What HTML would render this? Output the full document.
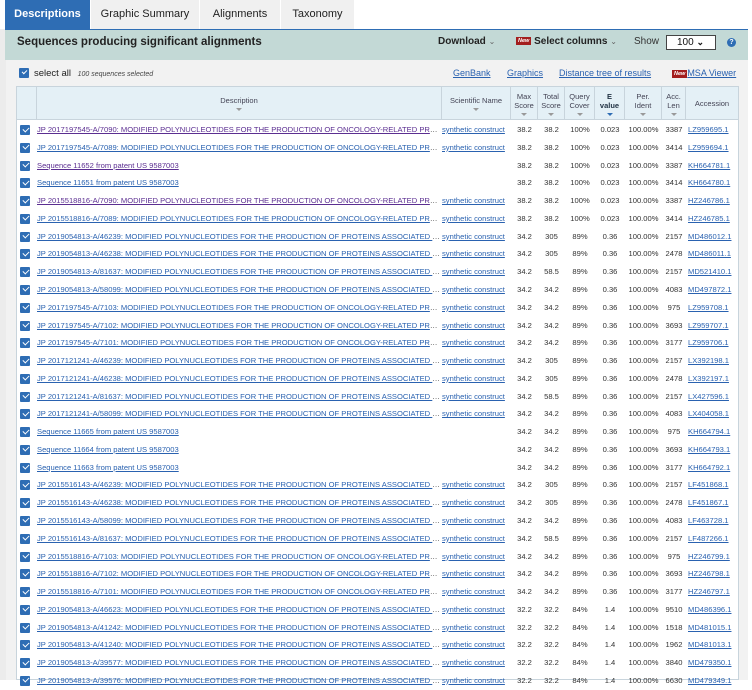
<!DOCTYPE html>
<html><head><meta charset="utf-8">
<style>
*{margin:0;padding:0;box-sizing:border-box}
body{width:752px;height:680px;overflow:hidden;background:#fff;font-family:"Liberation Sans",Arial,sans-serif;position:relative}
.abs{position:absolute}
.tab{position:absolute;top:0;height:29px;background:#f0f0f0;color:#222;font-size:11px;line-height:29px;text-align:center}
a{color:#2a62b0;text-decoration:underline}
.r{position:absolute;left:16px;width:723px;height:17.8px;font-size:7.6px;color:#333;line-height:17.8px;white-space:nowrap}
.r>span{position:absolute;top:0;overflow:hidden;text-overflow:ellipsis}
.cb{position:absolute;left:4px;top:4px;width:10px;height:10px;background:#2e6db4;border-radius:1px}
.cb:after{content:"";position:absolute;left:2.5px;top:1.5px;width:5px;height:3px;border-left:1.6px solid #fff;border-bottom:1.6px solid #fff;transform:rotate(-45deg)}
.d{left:21px;width:403px}
.s{left:426px;width:70px}
.c1{left:495px;width:27px;text-align:center}
.c2{left:522px;width:27px;text-align:center}
.c3{left:549px;width:30px;text-align:center}
.c4{left:579px;width:30px;text-align:center}
.c5{left:609px;width:37px;text-align:center}
.c6{left:646px;width:24px;text-align:center}
.c7{left:672px;width:51px;text-align:left}
.v{color:#5b2e91}
.h{position:absolute;top:87px;height:33px;font-size:7.5px;color:#445;text-align:center;line-height:9.5px;border-right:1px solid #c8d4dc;display:flex;flex-direction:column;justify-content:center;align-items:center}
.h i{display:block;width:0;height:0;border-left:3px solid transparent;border-right:3px solid transparent;border-top:3px solid #999;margin-top:2px}
.h i.b{border-top-color:#2e6db4}
.new{display:inline-block;background:#a31e1e;color:#fff;font-size:5.5px;font-style:italic;font-weight:bold;padding:1px 2px;vertical-align:middle}
</style></head><body>
<div class="abs" style="left:0;top:29px;width:6px;height:651px;background:#ececec"></div>
<div class="abs" style="left:6px;top:60px;width:742px;height:620px;background:#f2f2f2"></div>
<div class="tab" style="left:5px;width:85px;background:#2e6db4;color:#fff;font-weight:bold">Descriptions</div>
<div class="tab" style="left:91px;width:108px">Graphic Summary</div>
<div class="tab" style="left:200px;width:80px">Alignments</div>
<div class="tab" style="left:281px;width:73px">Taxonomy</div>
<div class="abs" style="left:5px;top:29px;width:743px;height:31px;background:#c3d9d6;border-top:1px solid #2e6db4"></div>
<div class="abs" style="left:17px;top:36px;font-size:11.5px;font-weight:bold;color:#222">Sequences producing significant alignments</div>
<div class="abs" style="left:438px;top:36px;font-size:10px;font-weight:bold;color:#222">Download <span style="font-weight:normal;color:#666;font-size:8px">&#8964;</span></div>
<div class="abs" style="left:516px;top:36px;font-size:10px;font-weight:bold;color:#222"><span class="new">New</span> Select columns <span style="font-weight:normal;color:#666;font-size:8px">&#8964;</span></div>
<div class="abs" style="left:634px;top:36px;font-size:10px;color:#333">Show</div>
<div class="abs" style="left:666px;top:35px;width:50px;height:15px;background:#fff;border:1px solid #444;font-size:10px;line-height:13px;padding-left:10px;color:#111">100 <b style="font-size:9px">&#8964;</b></div>
<div class="abs" style="left:727px;top:38px;width:9px;height:9px;border-radius:50%;background:#2e6db4;color:#fff;font-size:7px;font-weight:bold;text-align:center;line-height:9px">?</div>
<div class="abs" style="left:19px;top:68px;width:10px;height:10px;background:#2e6db4;border-radius:1px"></div>
<div class="abs" style="left:21.5px;top:69.5px;width:5px;height:3px;border-left:1.6px solid #fff;border-bottom:1.6px solid #fff;transform:rotate(-45deg)"></div>
<div class="abs" style="left:34px;top:68px;font-size:9.5px;color:#222">select all <i style="font-size:7px;color:#444;margin-left:4px">100 sequences selected</i></div>
<div class="abs" style="left:453px;top:68px;font-size:9px"><a>GenBank</a></div>
<div class="abs" style="left:507px;top:68px;font-size:9px"><a>Graphics</a></div>
<div class="abs" style="left:559px;top:68px;font-size:9px"><a>Distance tree of results</a></div>
<div class="abs" style="left:672px;top:68px;font-size:9px"><span class="new">New</span><a>MSA Viewer</a></div>
<div class="abs" style="left:16px;top:86px;width:723px;height:594px;background:#fff;border:1px solid #c8d4dc"></div>
<div class="abs" style="left:17px;top:87px;width:721px;height:33px;background:#e4f0f6;border-bottom:1px solid #c8d4dc"></div>
<div class="h" style="left:17px;width:20px"></div>
<div class="h" style="left:37px;width:405px">Description<i></i></div>
<div class="h" style="left:442px;width:69px">Scientific Name<i></i></div>
<div class="h" style="left:511px;width:27px">Max<br>Score<i></i></div>
<div class="h" style="left:538px;width:27px">Total<br>Score<i></i></div>
<div class="h" style="left:565px;width:30px">Query<br>Cover<i></i></div>
<div class="h" style="left:595px;width:30px;font-weight:bold;color:#234">E<br>value<i class="b"></i></div>
<div class="h" style="left:625px;width:37px">Per.<br>Ident<i></i></div>
<div class="h" style="left:662px;width:24px">Acc.<br>Len<i></i></div>
<div class="h" style="left:686px;width:52px;border-right:none">Accession</div>

<div class="r" style="top:121px"><i class="cb"></i><span class="d"><a class="v">JP 2017197545-A/7090: MODIFIED POLYNUCLEOTIDES FOR THE PRODUCTION OF ONCOLOGY-RELATED PROTEINS</a></span><span class="s"><a>synthetic construct</a></span><span class="c1">38.2</span><span class="c2">38.2</span><span class="c3">100%</span><span class="c4">0.023</span><span class="c5">100.00%</span><span class="c6">3387</span><span class="c7"><a>LZ959695.1</a></span></div>
<div class="r" style="top:138.8px"><i class="cb"></i><span class="d"><a>JP 2017197545-A/7089: MODIFIED POLYNUCLEOTIDES FOR THE PRODUCTION OF ONCOLOGY-RELATED PROTEINS</a></span><span class="s"><a>synthetic construct</a></span><span class="c1">38.2</span><span class="c2">38.2</span><span class="c3">100%</span><span class="c4">0.023</span><span class="c5">100.00%</span><span class="c6">3414</span><span class="c7"><a>LZ959694.1</a></span></div>
<div class="r" style="top:156.5px"><i class="cb"></i><span class="d"><a class="v">Sequence 11652 from patent US 9587003</a></span><span class="c1">38.2</span><span class="c2">38.2</span><span class="c3">100%</span><span class="c4">0.023</span><span class="c5">100.00%</span><span class="c6">3387</span><span class="c7"><a>KH664781.1</a></span></div>
<div class="r" style="top:174.3px"><i class="cb"></i><span class="d"><a>Sequence 11651 from patent US 9587003</a></span><span class="c1">38.2</span><span class="c2">38.2</span><span class="c3">100%</span><span class="c4">0.023</span><span class="c5">100.00%</span><span class="c6">3414</span><span class="c7"><a>KH664780.1</a></span></div>
<div class="r" style="top:192.1px"><i class="cb"></i><span class="d"><a class="v">JP 2015518816-A/7090: MODIFIED POLYNUCLEOTIDES FOR THE PRODUCTION OF ONCOLOGY-RELATED PROTEINS</a></span><span class="s"><a>synthetic construct</a></span><span class="c1">38.2</span><span class="c2">38.2</span><span class="c3">100%</span><span class="c4">0.023</span><span class="c5">100.00%</span><span class="c6">3387</span><span class="c7"><a>HZ246786.1</a></span></div>
<div class="r" style="top:209.9px"><i class="cb"></i><span class="d"><a>JP 2015518816-A/7089: MODIFIED POLYNUCLEOTIDES FOR THE PRODUCTION OF ONCOLOGY-RELATED PROTEINS</a></span><span class="s"><a>synthetic construct</a></span><span class="c1">38.2</span><span class="c2">38.2</span><span class="c3">100%</span><span class="c4">0.023</span><span class="c5">100.00%</span><span class="c6">3414</span><span class="c7"><a>HZ246785.1</a></span></div>
<div class="r" style="top:227.6px"><i class="cb"></i><span class="d"><a>JP 2019054813-A/46239: MODIFIED POLYNUCLEOTIDES FOR THE PRODUCTION OF PROTEINS ASSOCIATED WITH</a></span><span class="s"><a>synthetic construct</a></span><span class="c1">34.2</span><span class="c2">305</span><span class="c3">89%</span><span class="c4">0.36</span><span class="c5">100.00%</span><span class="c6">2157</span><span class="c7"><a>MD486012.1</a></span></div>
<div class="r" style="top:245.4px"><i class="cb"></i><span class="d"><a>JP 2019054813-A/46238: MODIFIED POLYNUCLEOTIDES FOR THE PRODUCTION OF PROTEINS ASSOCIATED WITH</a></span><span class="s"><a>synthetic construct</a></span><span class="c1">34.2</span><span class="c2">305</span><span class="c3">89%</span><span class="c4">0.36</span><span class="c5">100.00%</span><span class="c6">2478</span><span class="c7"><a>MD486011.1</a></span></div>
<div class="r" style="top:263.2px"><i class="cb"></i><span class="d"><a>JP 2019054813-A/81637: MODIFIED POLYNUCLEOTIDES FOR THE PRODUCTION OF PROTEINS ASSOCIATED WITH</a></span><span class="s"><a>synthetic construct</a></span><span class="c1">34.2</span><span class="c2">58.5</span><span class="c3">89%</span><span class="c4">0.36</span><span class="c5">100.00%</span><span class="c6">2157</span><span class="c7"><a>MD521410.1</a></span></div>
<div class="r" style="top:280.9px"><i class="cb"></i><span class="d"><a>JP 2019054813-A/58099: MODIFIED POLYNUCLEOTIDES FOR THE PRODUCTION OF PROTEINS ASSOCIATED WITH</a></span><span class="s"><a>synthetic construct</a></span><span class="c1">34.2</span><span class="c2">34.2</span><span class="c3">89%</span><span class="c4">0.36</span><span class="c5">100.00%</span><span class="c6">4083</span><span class="c7"><a>MD497872.1</a></span></div>
<div class="r" style="top:298.7px"><i class="cb"></i><span class="d"><a>JP 2017197545-A/7103: MODIFIED POLYNUCLEOTIDES FOR THE PRODUCTION OF ONCOLOGY-RELATED PROTEINS</a></span><span class="s"><a>synthetic construct</a></span><span class="c1">34.2</span><span class="c2">34.2</span><span class="c3">89%</span><span class="c4">0.36</span><span class="c5">100.00%</span><span class="c6">975</span><span class="c7"><a>LZ959708.1</a></span></div>
<div class="r" style="top:316.5px"><i class="cb"></i><span class="d"><a>JP 2017197545-A/7102: MODIFIED POLYNUCLEOTIDES FOR THE PRODUCTION OF ONCOLOGY-RELATED PROTEINS</a></span><span class="s"><a>synthetic construct</a></span><span class="c1">34.2</span><span class="c2">34.2</span><span class="c3">89%</span><span class="c4">0.36</span><span class="c5">100.00%</span><span class="c6">3693</span><span class="c7"><a>LZ959707.1</a></span></div>
<div class="r" style="top:334.2px"><i class="cb"></i><span class="d"><a>JP 2017197545-A/7101: MODIFIED POLYNUCLEOTIDES FOR THE PRODUCTION OF ONCOLOGY-RELATED PROTEINS</a></span><span class="s"><a>synthetic construct</a></span><span class="c1">34.2</span><span class="c2">34.2</span><span class="c3">89%</span><span class="c4">0.36</span><span class="c5">100.00%</span><span class="c6">3177</span><span class="c7"><a>LZ959706.1</a></span></div>
<div class="r" style="top:352px"><i class="cb"></i><span class="d"><a>JP 2017121241-A/46239: MODIFIED POLYNUCLEOTIDES FOR THE PRODUCTION OF PROTEINS ASSOCIATED WITH</a></span><span class="s"><a>synthetic construct</a></span><span class="c1">34.2</span><span class="c2">305</span><span class="c3">89%</span><span class="c4">0.36</span><span class="c5">100.00%</span><span class="c6">2157</span><span class="c7"><a>LX392198.1</a></span></div>
<div class="r" style="top:369.8px"><i class="cb"></i><span class="d"><a>JP 2017121241-A/46238: MODIFIED POLYNUCLEOTIDES FOR THE PRODUCTION OF PROTEINS ASSOCIATED WITH</a></span><span class="s"><a>synthetic construct</a></span><span class="c1">34.2</span><span class="c2">305</span><span class="c3">89%</span><span class="c4">0.36</span><span class="c5">100.00%</span><span class="c6">2478</span><span class="c7"><a>LX392197.1</a></span></div>
<div class="r" style="top:387.6px"><i class="cb"></i><span class="d"><a>JP 2017121241-A/81637: MODIFIED POLYNUCLEOTIDES FOR THE PRODUCTION OF PROTEINS ASSOCIATED WITH</a></span><span class="s"><a>synthetic construct</a></span><span class="c1">34.2</span><span class="c2">58.5</span><span class="c3">89%</span><span class="c4">0.36</span><span class="c5">100.00%</span><span class="c6">2157</span><span class="c7"><a>LX427596.1</a></span></div>
<div class="r" style="top:405.3px"><i class="cb"></i><span class="d"><a>JP 2017121241-A/58099: MODIFIED POLYNUCLEOTIDES FOR THE PRODUCTION OF PROTEINS ASSOCIATED WITH</a></span><span class="s"><a>synthetic construct</a></span><span class="c1">34.2</span><span class="c2">34.2</span><span class="c3">89%</span><span class="c4">0.36</span><span class="c5">100.00%</span><span class="c6">4083</span><span class="c7"><a>LX404058.1</a></span></div>
<div class="r" style="top:423.1px"><i class="cb"></i><span class="d"><a>Sequence 11665 from patent US 9587003</a></span><span class="c1">34.2</span><span class="c2">34.2</span><span class="c3">89%</span><span class="c4">0.36</span><span class="c5">100.00%</span><span class="c6">975</span><span class="c7"><a>KH664794.1</a></span></div>
<div class="r" style="top:440.9px"><i class="cb"></i><span class="d"><a>Sequence 11664 from patent US 9587003</a></span><span class="c1">34.2</span><span class="c2">34.2</span><span class="c3">89%</span><span class="c4">0.36</span><span class="c5">100.00%</span><span class="c6">3693</span><span class="c7"><a>KH664793.1</a></span></div>
<div class="r" style="top:458.6px"><i class="cb"></i><span class="d"><a>Sequence 11663 from patent US 9587003</a></span><span class="c1">34.2</span><span class="c2">34.2</span><span class="c3">89%</span><span class="c4">0.36</span><span class="c5">100.00%</span><span class="c6">3177</span><span class="c7"><a>KH664792.1</a></span></div>
<div class="r" style="top:476.4px"><i class="cb"></i><span class="d"><a>JP 2015516143-A/46239: MODIFIED POLYNUCLEOTIDES FOR THE PRODUCTION OF PROTEINS ASSOCIATED WITH</a></span><span class="s"><a>synthetic construct</a></span><span class="c1">34.2</span><span class="c2">305</span><span class="c3">89%</span><span class="c4">0.36</span><span class="c5">100.00%</span><span class="c6">2157</span><span class="c7"><a>LF451868.1</a></span></div>
<div class="r" style="top:494.2px"><i class="cb"></i><span class="d"><a>JP 2015516143-A/46238: MODIFIED POLYNUCLEOTIDES FOR THE PRODUCTION OF PROTEINS ASSOCIATED WITH</a></span><span class="s"><a>synthetic construct</a></span><span class="c1">34.2</span><span class="c2">305</span><span class="c3">89%</span><span class="c4">0.36</span><span class="c5">100.00%</span><span class="c6">2478</span><span class="c7"><a>LF451867.1</a></span></div>
<div class="r" style="top:511.9px"><i class="cb"></i><span class="d"><a>JP 2015516143-A/58099: MODIFIED POLYNUCLEOTIDES FOR THE PRODUCTION OF PROTEINS ASSOCIATED WITH</a></span><span class="s"><a>synthetic construct</a></span><span class="c1">34.2</span><span class="c2">34.2</span><span class="c3">89%</span><span class="c4">0.36</span><span class="c5">100.00%</span><span class="c6">4083</span><span class="c7"><a>LF463728.1</a></span></div>
<div class="r" style="top:529.7px"><i class="cb"></i><span class="d"><a>JP 2015516143-A/81637: MODIFIED POLYNUCLEOTIDES FOR THE PRODUCTION OF PROTEINS ASSOCIATED WITH</a></span><span class="s"><a>synthetic construct</a></span><span class="c1">34.2</span><span class="c2">58.5</span><span class="c3">89%</span><span class="c4">0.36</span><span class="c5">100.00%</span><span class="c6">2157</span><span class="c7"><a>LF487266.1</a></span></div>
<div class="r" style="top:547.5px"><i class="cb"></i><span class="d"><a>JP 2015518816-A/7103: MODIFIED POLYNUCLEOTIDES FOR THE PRODUCTION OF ONCOLOGY-RELATED PROTEINS</a></span><span class="s"><a>synthetic construct</a></span><span class="c1">34.2</span><span class="c2">34.2</span><span class="c3">89%</span><span class="c4">0.36</span><span class="c5">100.00%</span><span class="c6">975</span><span class="c7"><a>HZ246799.1</a></span></div>
<div class="r" style="top:565.2px"><i class="cb"></i><span class="d"><a>JP 2015518816-A/7102: MODIFIED POLYNUCLEOTIDES FOR THE PRODUCTION OF ONCOLOGY-RELATED PROTEINS</a></span><span class="s"><a>synthetic construct</a></span><span class="c1">34.2</span><span class="c2">34.2</span><span class="c3">89%</span><span class="c4">0.36</span><span class="c5">100.00%</span><span class="c6">3693</span><span class="c7"><a>HZ246798.1</a></span></div>
<div class="r" style="top:583px"><i class="cb"></i><span class="d"><a>JP 2015518816-A/7101: MODIFIED POLYNUCLEOTIDES FOR THE PRODUCTION OF ONCOLOGY-RELATED PROTEINS</a></span><span class="s"><a>synthetic construct</a></span><span class="c1">34.2</span><span class="c2">34.2</span><span class="c3">89%</span><span class="c4">0.36</span><span class="c5">100.00%</span><span class="c6">3177</span><span class="c7"><a>HZ246797.1</a></span></div>
<div class="r" style="top:600.8px"><i class="cb"></i><span class="d"><a>JP 2019054813-A/46623: MODIFIED POLYNUCLEOTIDES FOR THE PRODUCTION OF PROTEINS ASSOCIATED WITH</a></span><span class="s"><a>synthetic construct</a></span><span class="c1">32.2</span><span class="c2">32.2</span><span class="c3">84%</span><span class="c4">1.4</span><span class="c5">100.00%</span><span class="c6">9510</span><span class="c7"><a>MD486396.1</a></span></div>
<div class="r" style="top:618.5px"><i class="cb"></i><span class="d"><a>JP 2019054813-A/41242: MODIFIED POLYNUCLEOTIDES FOR THE PRODUCTION OF PROTEINS ASSOCIATED WITH</a></span><span class="s"><a>synthetic construct</a></span><span class="c1">32.2</span><span class="c2">32.2</span><span class="c3">84%</span><span class="c4">1.4</span><span class="c5">100.00%</span><span class="c6">1518</span><span class="c7"><a>MD481015.1</a></span></div>
<div class="r" style="top:636.3px"><i class="cb"></i><span class="d"><a>JP 2019054813-A/41240: MODIFIED POLYNUCLEOTIDES FOR THE PRODUCTION OF PROTEINS ASSOCIATED WITH</a></span><span class="s"><a>synthetic construct</a></span><span class="c1">32.2</span><span class="c2">32.2</span><span class="c3">84%</span><span class="c4">1.4</span><span class="c5">100.00%</span><span class="c6">1962</span><span class="c7"><a>MD481013.1</a></span></div>
<div class="r" style="top:654.1px"><i class="cb"></i><span class="d"><a>JP 2019054813-A/39577: MODIFIED POLYNUCLEOTIDES FOR THE PRODUCTION OF PROTEINS ASSOCIATED WITH</a></span><span class="s"><a>synthetic construct</a></span><span class="c1">32.2</span><span class="c2">32.2</span><span class="c3">84%</span><span class="c4">1.4</span><span class="c5">100.00%</span><span class="c6">3840</span><span class="c7"><a>MD479350.1</a></span></div>
<div class="r" style="top:671.8px"><i class="cb"></i><span class="d"><a>JP 2019054813-A/39576: MODIFIED POLYNUCLEOTIDES FOR THE PRODUCTION OF PROTEINS ASSOCIATED WITH</a></span><span class="s"><a>synthetic construct</a></span><span class="c1">32.2</span><span class="c2">32.2</span><span class="c3">84%</span><span class="c4">1.4</span><span class="c5">100.00%</span><span class="c6">6630</span><span class="c7"><a>MD479349.1</a></span></div>
</body></html>
